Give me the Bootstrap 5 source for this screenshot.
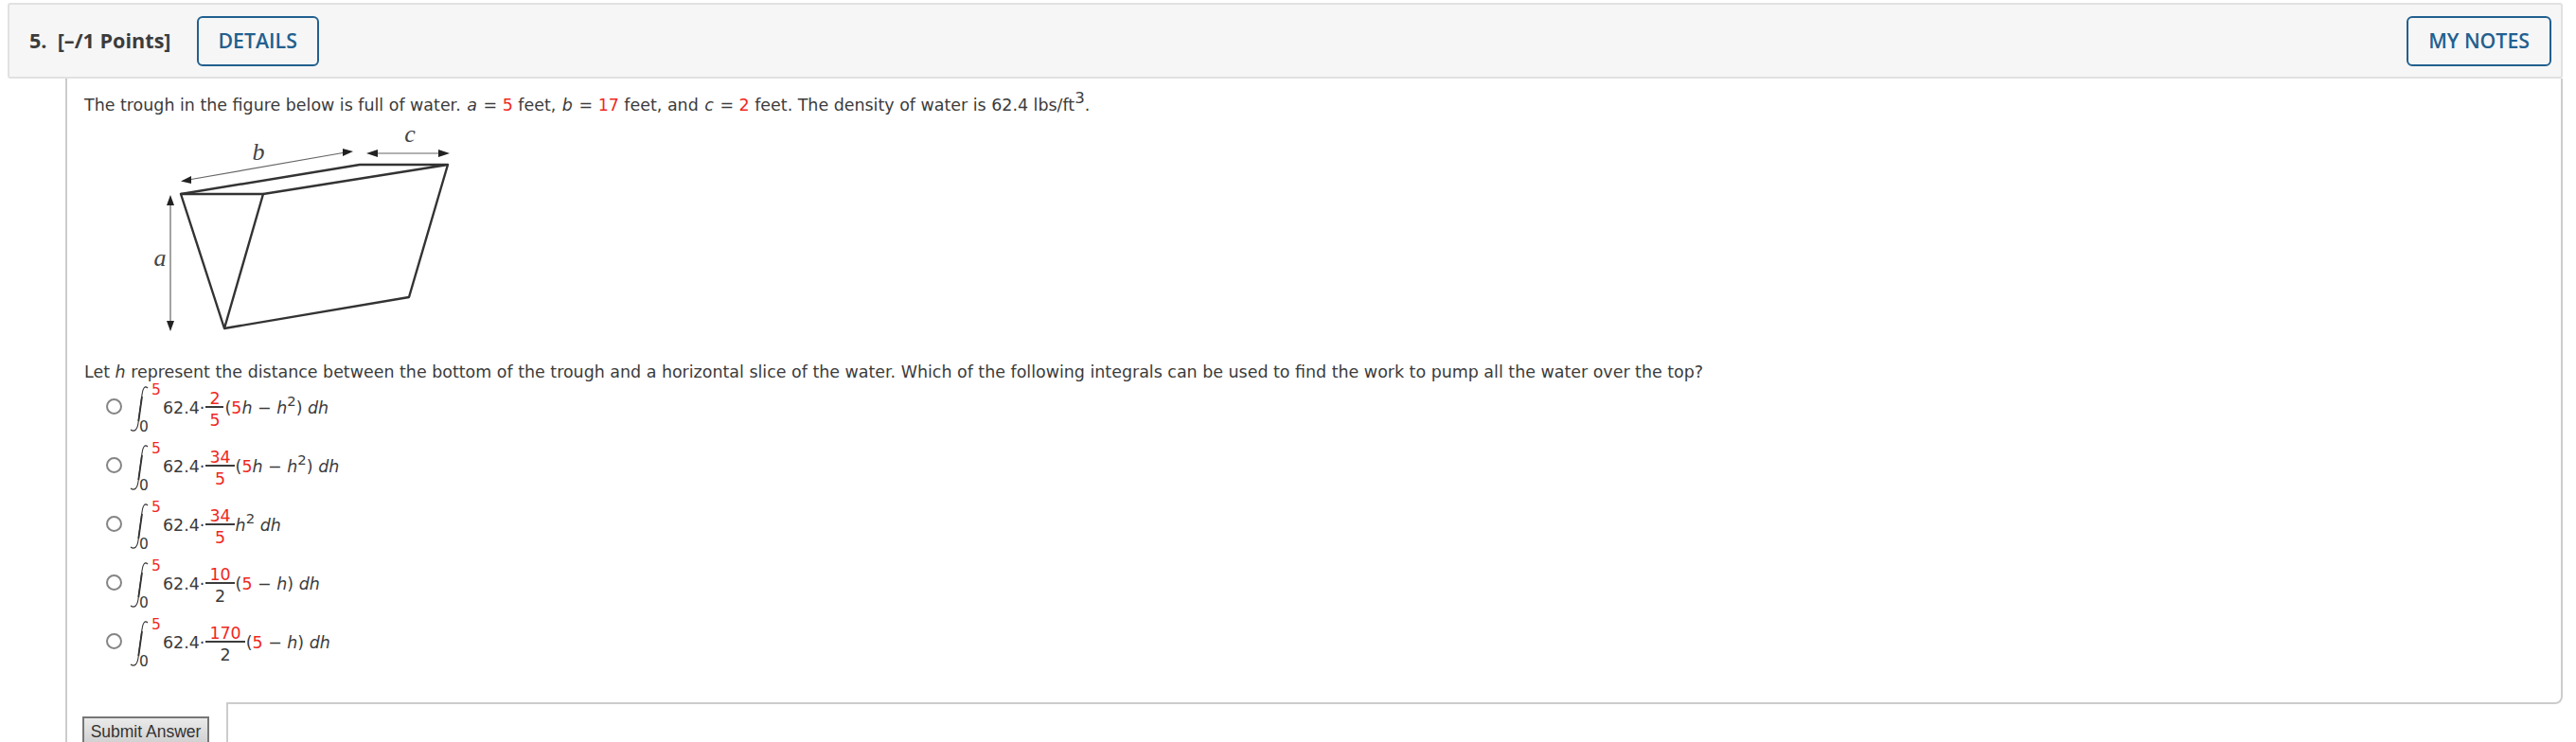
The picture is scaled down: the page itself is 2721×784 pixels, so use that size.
<!DOCTYPE html>
<html lang="en">
<head>
<meta charset="utf-8">
<title>Question 5</title>
<link href="https://cdn.jsdelivr.net/npm/bootstrap@5.3.0/dist/css/bootstrap.min.css" rel="stylesheet">
<style>
html,body{height:784px;overflow:hidden;background:#fff}
body{font-family:"DejaVu Sans",Verdana,sans-serif;font-size:17.45px;color:#3b3b3b;padding:3px 14px 0 8px}
.qhead{height:80px;background:#f6f6f6;border:2px solid #e1e1e1;border-radius:3px;padding:0 10px 0 21px}
.qtitle{font-family:"Open Sans",sans-serif;font-weight:700;font-size:21.6px;color:#3c3c3c;margin-right:27px;white-space:pre}
.qbtn{font-family:"Open Sans",sans-serif;font-weight:600;font-size:21.3px;line-height:1;color:#22608f;border:2px solid #22608f;border-radius:6px;background:transparent;height:53px;padding:0 21px}
.qbtn:hover{color:#22608f;border-color:#22608f}
.qframe{margin-left:61px;border-left:2px solid #ccc}
.qpanel{height:661px;border-right:2px solid #ccc;border-bottom:2px solid #ccc;border-bottom-right-radius:8px;padding:15px 0 0 18px}
.qline{line-height:26px;margin:0;white-space:nowrap}
.qvars i{padding:0 1px}
.qvars sup{font-size:.95em}
sup{font-size:.85em;line-height:0}
.red{color:#f0281e}
i{font-style:italic}
.fig{display:block;margin:12px 0 0 -20px;overflow:visible}
.qtext2{margin-top:19px}
.qopts{margin:-8px 0 0 23px;list-style:none;padding:0}
.qopt{height:62px;gap:8px}
.qradio.form-check-input{width:17px;height:17px;margin:0;border:2px solid #858585;background:#fff;flex:none}
.inte{position:relative;display:block;width:27px;height:58px;flex:none}
.inte svg{position:absolute;left:0;top:8px}
.lim{position:absolute;font-size:15.5px;line-height:14px}
.lim-up{left:23px;top:5px}
.lim-lo{left:10px;top:44px}
.frac{display:inline-flex;flex-direction:column;align-items:center;line-height:1;margin:0 1px}
.frac>span{padding:0 4px;height:24px;line-height:27px;align-self:stretch;text-align:center}
.frac>span:first-child{border-bottom:2px solid #3b3b3b;height:22px;line-height:24px}
.expr{white-space:nowrap;display:flex;align-items:center;margin-top:5px}
.qfoot{height:60px}
.qcell{width:168px;flex:none;background:#fff;margin-top:-2px;padding:15px 0 0 16px}
.qfill{flex:1;border-left:2px solid #ccc}
.qsubmit{font-family:"Liberation Sans",Arial,sans-serif;font-size:17.5px;line-height:20px;color:#333;background:linear-gradient(#eaeaea,#cfcfcf);border:2px solid #777;border-radius:0;padding:3px 0;height:32px;width:134px;white-space:nowrap;text-align:center}
</style>
</head>
<body>
<div class="qhead d-flex align-items-center">
  <span class="qtitle">5.  [–/1 Points]</span>
  <button class="btn qbtn" type="button">DETAILS</button>
  <button class="btn qbtn ms-auto" type="button">MY NOTES</button>
</div>
<div class="qframe">
  <div class="qpanel">
    <p class="qline qvars">The trough in the figure below is full of water. <i>a</i> = <span class="red">5</span> feet, <i>b</i> = <span class="red">17</span> feet, and <i>c</i> = <span class="red">2</span> feet. The density of water is 62.4 lbs/ft<sup>3</sup>.</p>
    <svg class="fig" width="460" height="225" viewBox="0 0 460 225" role="img" aria-label="Trough diagram">
      <g fill="none" stroke="#333" stroke-width="2.4" stroke-linejoin="round">
        <path d="M122 69H209L168 211Z"/>
        <path d="M122 69L311 38H404L209 69"/>
        <path d="M404 38L363 178L168 211"/>
      </g>
      <g stroke="#666" stroke-width="1.2" fill="#222">
        <path d="M130 54L296 25" fill="none"/>
        <path d="M122 55.5L133 50V58Z" stroke="none"/>
        <path d="M304 24L293 21V29Z" stroke="none"/>
        <path d="M326 26H400" fill="none"/>
        <path d="M318 26L330 22V30Z" stroke="none"/>
        <path d="M406 26L394 22V30Z" stroke="none"/>
        <path d="M111 78V208" fill="none"/>
        <path d="M111 70L107 81H115Z" stroke="none"/>
        <path d="M111 214L107 203H115Z" stroke="none"/>
      </g>
      <g font-family="Liberation Serif,serif" font-style="italic" font-size="26" fill="#444" text-anchor="middle">
        <text x="204" y="33">b</text>
        <text x="364" y="14">c</text>
        <text x="100" y="145">a</text>
      </g>
    </svg>
    <p class="qline qtext2">Let <i>h</i> represent the distance between the bottom of the trough and a horizontal slice of the water. Which of the following integrals can be used to find the work to pump all the water over the top?</p>
    <ul class="qopts">
      <li class="qopt d-flex align-items-center">
        <input class="form-check-input qradio" type="radio" name="q5" aria-label="Option 1">
        <span class="inte"><svg width="24" height="50" viewBox="0 0 24 50"><path d="M19 2C16 -1 14 2 13 9L9 39C8 46 5 49 1 46" fill="none" stroke="#333" stroke-width="1.1"/><path d="M13 11L9.3 37" fill="none" stroke="#333" stroke-width="1.8"/></svg><span class="lim lim-up red">5</span><span class="lim lim-lo">0</span></span>
        <span class="expr">62.4·<span class="frac"><span class="red">2</span><span class="red">5</span></span>(<span class="red">5</span><i>h</i>&nbsp;−&nbsp;<i>h</i><sup>2</sup>)&nbsp;<i>dh</i></span>
      </li>
      <li class="qopt d-flex align-items-center">
        <input class="form-check-input qradio" type="radio" name="q5" aria-label="Option 2">
        <span class="inte"><svg width="24" height="50" viewBox="0 0 24 50"><path d="M19 2C16 -1 14 2 13 9L9 39C8 46 5 49 1 46" fill="none" stroke="#333" stroke-width="1.1"/><path d="M13 11L9.3 37" fill="none" stroke="#333" stroke-width="1.8"/></svg><span class="lim lim-up red">5</span><span class="lim lim-lo">0</span></span>
        <span class="expr">62.4·<span class="frac"><span class="red">34</span><span class="red">5</span></span>(<span class="red">5</span><i>h</i>&nbsp;−&nbsp;<i>h</i><sup>2</sup>)&nbsp;<i>dh</i></span>
      </li>
      <li class="qopt d-flex align-items-center">
        <input class="form-check-input qradio" type="radio" name="q5" aria-label="Option 3">
        <span class="inte"><svg width="24" height="50" viewBox="0 0 24 50"><path d="M19 2C16 -1 14 2 13 9L9 39C8 46 5 49 1 46" fill="none" stroke="#333" stroke-width="1.1"/><path d="M13 11L9.3 37" fill="none" stroke="#333" stroke-width="1.8"/></svg><span class="lim lim-up red">5</span><span class="lim lim-lo">0</span></span>
        <span class="expr">62.4·<span class="frac"><span class="red">34</span><span class="red">5</span></span><i>h</i><sup>2</sup>&nbsp;<i>dh</i></span>
      </li>
      <li class="qopt d-flex align-items-center">
        <input class="form-check-input qradio" type="radio" name="q5" aria-label="Option 4">
        <span class="inte"><svg width="24" height="50" viewBox="0 0 24 50"><path d="M19 2C16 -1 14 2 13 9L9 39C8 46 5 49 1 46" fill="none" stroke="#333" stroke-width="1.1"/><path d="M13 11L9.3 37" fill="none" stroke="#333" stroke-width="1.8"/></svg><span class="lim lim-up red">5</span><span class="lim lim-lo">0</span></span>
        <span class="expr">62.4·<span class="frac"><span class="red">10</span><span>2</span></span>(<span class="red">5</span>&nbsp;−&nbsp;<i>h</i>)&nbsp;<i>dh</i></span>
      </li>
      <li class="qopt d-flex align-items-center">
        <input class="form-check-input qradio" type="radio" name="q5" aria-label="Option 5">
        <span class="inte"><svg width="24" height="50" viewBox="0 0 24 50"><path d="M19 2C16 -1 14 2 13 9L9 39C8 46 5 49 1 46" fill="none" stroke="#333" stroke-width="1.1"/><path d="M13 11L9.3 37" fill="none" stroke="#333" stroke-width="1.8"/></svg><span class="lim lim-up red">5</span><span class="lim lim-lo">0</span></span>
        <span class="expr">62.4·<span class="frac"><span class="red">170</span><span>2</span></span>(<span class="red">5</span>&nbsp;−&nbsp;<i>h</i>)&nbsp;<i>dh</i></span>
      </li>
    </ul>
  </div>
  <div class="qfoot d-flex">
    <div class="qcell"><button class="qsubmit" type="button">Submit Answer</button></div>
    <div class="qfill"></div>
  </div>
</div>
<script src="https://cdn.jsdelivr.net/npm/bootstrap@5.3.0/dist/js/bootstrap.bundle.min.js"></script>
</body>
</html>
